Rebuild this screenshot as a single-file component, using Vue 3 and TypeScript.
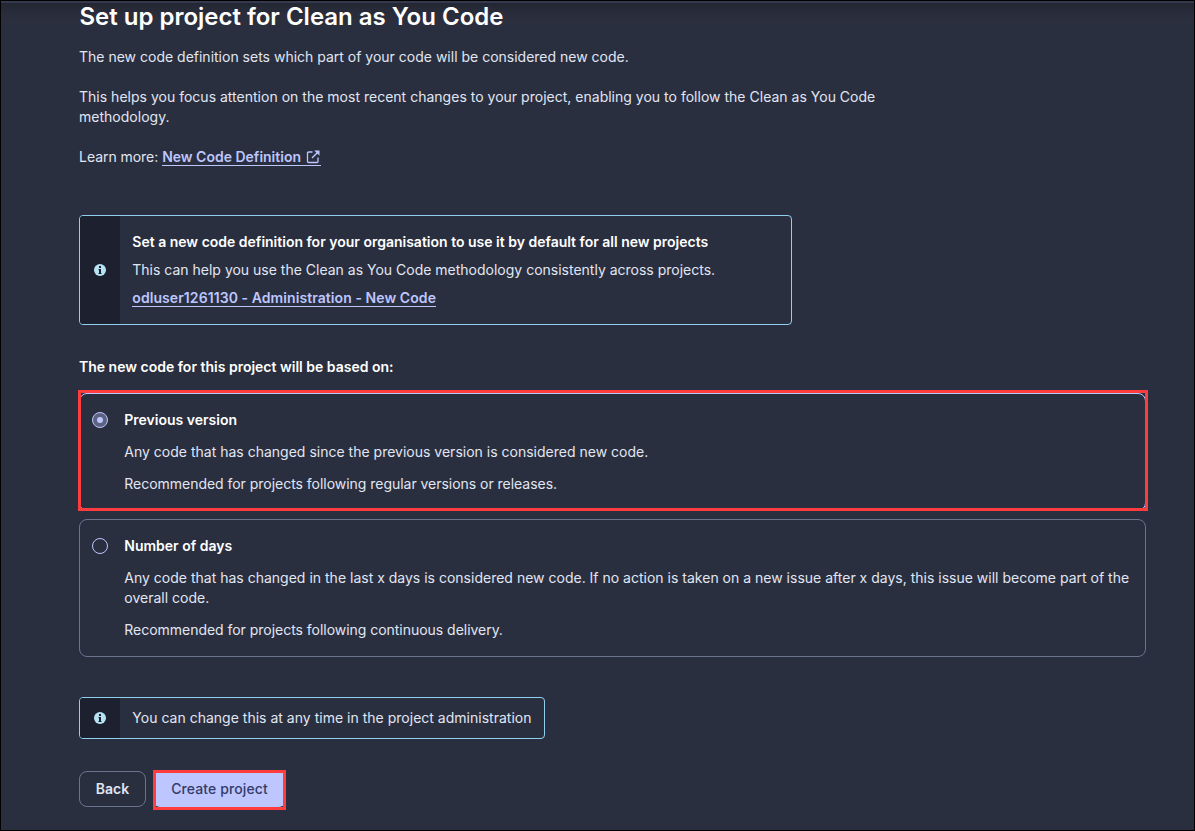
<script setup lang="ts">
import { ref } from 'vue'

interface Option {
  id: string
  title: string
  lines: string[]
}

const options: Option[] = [
  {
    id: 'previous',
    title: 'Previous version',
    lines: [
      'Any code that has changed since the previous version is considered new code.',
      'Recommended for projects following regular versions or releases.',
    ],
  },
  {
    id: 'days',
    title: 'Number of days',
    lines: [
      'Any code that has changed in the last x days is considered new code. If no action is taken on a new issue after x days, this issue will become part of the overall code.',
      'Recommended for projects following continuous delivery.',
    ],
  },
]

const selected = ref('previous')
</script>

<template>
  <main class="page">
    <h1>Set up project for Clean as You Code</h1>
    <div class="intro">
      <p>The new code definition sets which part of your code will be considered new code.</p>
      <p class="wide">
        This helps you focus attention on the most recent changes to your project, enabling you to
        follow the Clean as You Code methodology.
      </p>
      <p class="learn">
        Learn more:
        <a class="link"
          >New Code Definition<svg class="external" width="16" height="16" viewBox="0 0 16 16">
            <path
              d="M7.5 3H3.6Q2.5 3 2.5 4.1V12.4Q2.5 13.5 3.6 13.5H11.9Q13 13.5 13 12.4V8.5"
              fill="none"
              stroke="currentColor"
              stroke-width="1.3"
            />
            <path d="M7 9L12.5 3.5" fill="none" stroke="currentColor" stroke-width="1.4" />
            <path d="M9.2 1.5H14.5V6.8Z" fill="currentColor" /></svg
        ></a>
      </p>
    </div>

    <section class="banner banner-large">
      <div class="banner-icon">
        <svg width="12" height="12" viewBox="0 0 12 12">
          <circle cx="6" cy="6" r="6" fill="#b6e2f4" />
          <path d="M5 2H7V4H5ZM4.5 5H7V9H7.5V10H4.5V9H5V6H4.5Z" fill="#1d202e" />
        </svg>
      </div>
      <div class="banner-body">
        <strong>Set a new code definition for your organisation to use it by default for all new projects</strong>
        <span>This can help you use the Clean as You Code methodology consistently across projects.</span>
        <span><a class="link org-link">odluser1261130 - Administration - New Code</a></span>
      </div>
    </section>

    <h2>The new code for this project will be based on:</h2>

    <div class="options" role="radiogroup">
      <div
        v-for="option in options"
        :key="option.id"
        class="option"
        :class="{ selected: selected === option.id }"
        role="radio"
        :aria-checked="selected === option.id"
        @click="selected = option.id"
      >
        <span class="radio"></span>
        <div class="option-body">
          <strong>{{ option.title }}</strong>
          <p v-for="line in option.lines" :key="line">{{ line }}</p>
        </div>
      </div>
    </div>

    <section class="banner banner-small">
      <div class="banner-icon">
        <svg width="12" height="12" viewBox="0 0 12 12">
          <circle cx="6" cy="6" r="6" fill="#b6e2f4" />
          <path d="M5 2H7V4H5ZM4.5 5H7V9H7.5V10H4.5V9H5V6H4.5Z" fill="#1d202e" />
        </svg>
      </div>
      <div class="banner-body">
        <span class="wide">You can change this at any time in the project administration</span>
      </div>
    </section>

    <div class="actions">
      <button class="back">Back</button>
      <button class="create">Create project</button>
    </div>
  </main>
</template>

<style>
body {
  margin: 0;
  overflow: hidden;
}
</style>

<style scoped>
* {
  box-sizing: border-box;
}
.page {
  width: 1195px;
  height: 831px;
  padding: 0 48px 0 78px;
  border: 1px solid #000;
  background: linear-gradient(#34394e 0 2px, #232633 2px, #2a2d3b 14px, #2a2f3f 24px);
  color: #e1e6f3;
  font: 400 14px/20px Inter, 'Open Sans', sans-serif;
}
h1,
h2,
p {
  margin: 0;
}
h1 {
  color: #fff;
  font-size: 24px;
  font-weight: 600;
  line-height: 32px;
  text-indent: 0.4px;
}
.intro {
  display: flex;
  flex-direction: column;
  gap: 20px;
  width: 800px;
  margin-top: 14px;
}
.wide {
  letter-spacing: 0.012px;
}
.learn {
  letter-spacing: -0.04px;
}
.link {
  border-bottom: 1px solid #bdc6ff;
  color: #bdc6ff;
  font-weight: 600;
  letter-spacing: 0;
}
.org-link {
  letter-spacing: 0.075px;
}
.external {
  margin: 0 0 0 4.5px;
  vertical-align: -3px;
}
.banner {
  display: flex;
  overflow: hidden;
  border: 1px solid #8fd0f0;
  border-radius: 4px;
}
.banner-large {
  width: 713px;
  height: 110px;
  margin-top: 48px;
}
.banner-small {
  width: 466px;
  height: 42px;
  margin-top: 40px;
}
.banner-icon {
  display: flex;
  flex: 0 0 40px;
  align-items: center;
  justify-content: center;
  background: #1d202e;
}
.banner-body {
  display: flex;
  flex-direction: column;
  justify-content: center;
  gap: 8px;
  padding-left: 12.3px;
  white-space: nowrap;
}
strong {
  color: #fff;
  font-weight: 600;
}
h2 {
  margin-top: 32px;
  color: #fff;
  font-size: 14px;
  font-weight: 600;
  line-height: 20px;
}
.options {
  display: flex;
  flex-direction: column;
  gap: 8px;
  margin-top: 16px;
}
.option {
  position: relative;
  display: flex;
  gap: 16.3px;
  padding: 16px 12px;
  border: 1px solid #6a7490;
  border-radius: 8px;
}
.option.selected {
  border-color: #bdc6ff;
}
.option.selected::after {
  position: absolute;
  inset: -4px -3px -1px -2px;
  border: 3px solid #ff3d3f;
  content: '';
}
.radio {
  display: flex;
  flex: 0 0 16px;
  align-items: center;
  justify-content: center;
  height: 16px;
  margin-top: 2px;
  border: 1px solid #bdc6ff;
  border-radius: 50%;
}
.selected .radio {
  background: #5d6280;
}
.selected .radio::after {
  width: 6px;
  height: 6px;
  border-radius: 50%;
  background: #bdc6ff;
  content: '';
}
.option-body {
  display: flex;
  flex-direction: column;
  gap: 12px;
}
.option-body p:nth-child(2) {
  letter-spacing: 0.005px;
}
.option-body p:nth-child(3) {
  letter-spacing: -0.03px;
}
.actions {
  display: flex;
  gap: 8px;
  margin-top: 32px;
}
button {
  height: 36px;
  padding: 0;
  border: 1px solid #6a7490;
  border-radius: 8px;
  background: transparent;
  color: #e1e6f3;
  font: 600 14px/20px Inter, 'Open Sans', sans-serif;
}
.back {
  width: 67px;
}
.create {
  position: relative;
  width: 131px;
  border: 0;
  border-radius: 6px;
  background: #bdc6ff;
  color: #343b68;
  font-weight: 500;
  letter-spacing: 0.1px;
}
.create::after {
  position: absolute;
  inset: -1px -1px -3px;
  border: 3px solid #ff3d3f;
  content: '';
}
</style>
